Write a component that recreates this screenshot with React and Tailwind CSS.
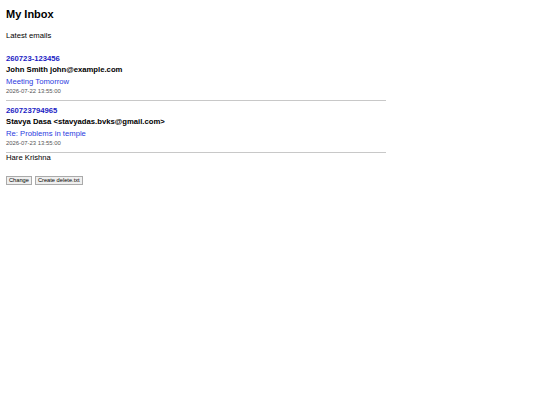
const emails = [
  {
    id: "260723-123456",
    from: "John Smith john@example.com",
    subject: "Meeting Tomorrow",
    date: "2026-07-22 13:55:00",
  },
  {
    id: "260723794965",
    from: "Stavya Dasa <stavyadas.bvks@gmail.com>",
    subject: "Re: Problems in temple",
    date: "2026-07-23 13:55:00",
  },
];

function EmailItem({ email }) {
  return (
    <div>
      <div className="text-[7.7px] leading-[11px] font-bold text-[#1c1cc4]">{email.id}</div>
      <div className="text-[7.7px] leading-[11px] font-bold">{email.from}</div>
      <div className="mt-[1px] text-[7.7px] leading-[11px] text-[#2a3ae0]">{email.subject}</div>
      <div className="text-[5.9px] leading-[8px] text-[#555]">{email.date}</div>
      <hr className="mt-[5px] mb-[4px] w-[380px] border-0 border-t border-[#c8c8c8]" />
    </div>
  );
}

export default function App() {
  return (
    <div className="min-h-[405px] bg-white px-[6px] pt-[8px] font-['Liberation_Sans',Arial,sans-serif] text-black">
      <h1 className="text-[11px] leading-[13px] font-bold">My Inbox</h1>
      <p className="mt-[10px] text-[7.7px] leading-[9px]">Latest emails</p>
      <div className="mt-[13px]">
        {emails.map((e) => (
          <EmailItem key={e.id} email={e} />
        ))}
      </div>
      <p className="-mt-[4px] text-[7.7px] leading-[9px]">Hare Krishna</p>
      <div className="mt-[14px] flex gap-[3px]">
        <button className="h-[9px] border border-[#aaa] bg-[#efefef] px-[2px] text-[5.7px] leading-[7px]">Change</button>
        <button className="h-[9px] border border-[#aaa] bg-[#efefef] px-[2px] text-[5.7px] leading-[7px]">Create delete.txt</button>
      </div>
    </div>
  );
}
